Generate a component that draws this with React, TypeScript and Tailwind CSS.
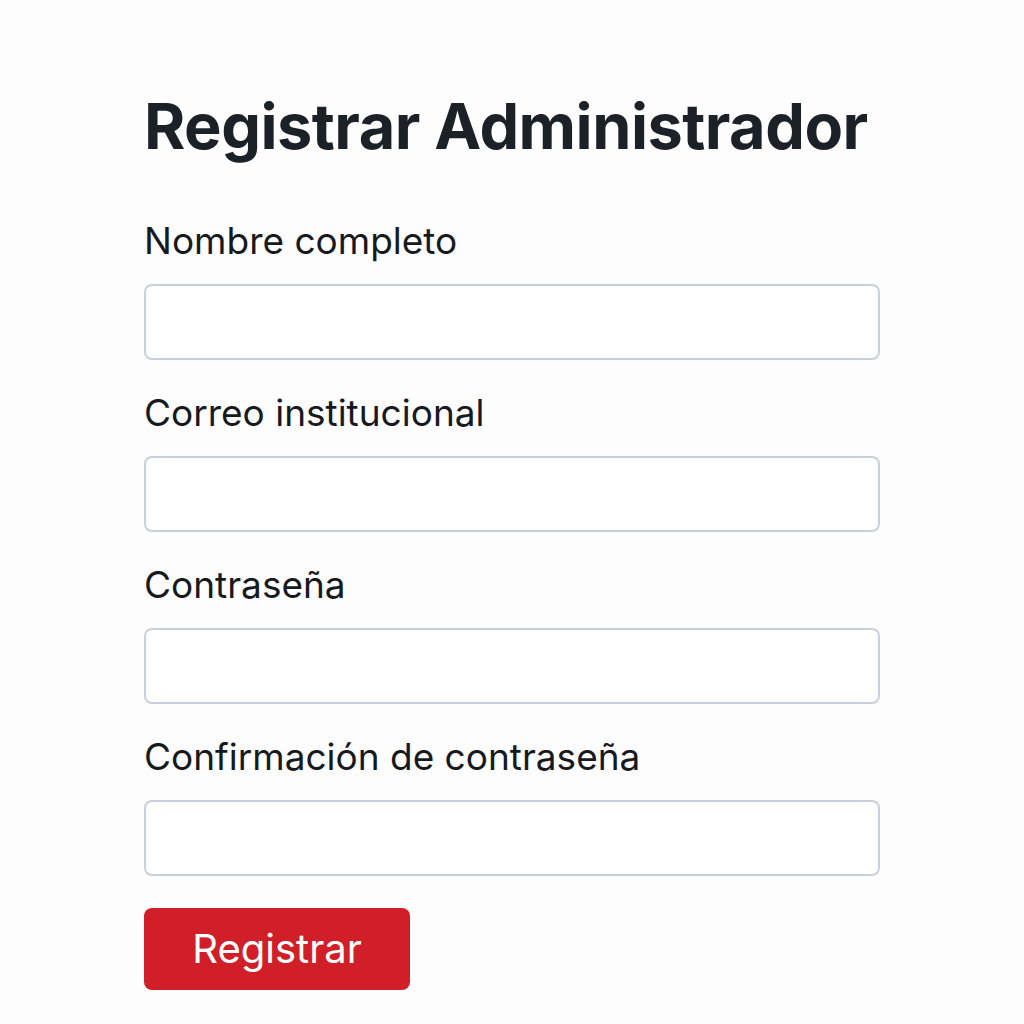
const fields = [
  { id: "nombre", label: "Nombre completo", type: "text" },
  { id: "correo", label: "Correo institucional", type: "email" },
  { id: "password", label: "Contraseña", type: "password" },
  { id: "confirm", label: "Confirmación de contraseña", type: "password" },
];

export default function App() {
  return (
    <div className="min-h-screen bg-[#fdfdfd] font-['Inter',sans-serif] text-[#1c2128]">
      <div className="w-[736px] ml-[144px] pt-[86px]">
        <h1 className="text-[63px] font-bold leading-[80px] tracking-[-0.5px]">
          Registrar Administrador
        </h1>
        <form className="mt-[53px] flex flex-col">
          {fields.map((f) => (
            <div key={f.id} className="flex flex-col mb-[31px]">
              <label htmlFor={f.id} className="text-[37px] leading-[44px] mb-[21px] text-[#16191d]">
                {f.label}
              </label>
              <input
                id={f.id}
                type={f.type}
                className="h-[76px] w-full rounded-[8px] border-2 border-[#c8d0db] bg-white px-4"
              />
            </div>
          ))}
          <button
            type="submit"
            className="mt-[1px] w-[266px] h-[82px] rounded-[8px] bg-[#d11f2a] text-white text-[40px]"
          >
            Registrar
          </button>
        </form>
      </div>
    </div>
  );
}
